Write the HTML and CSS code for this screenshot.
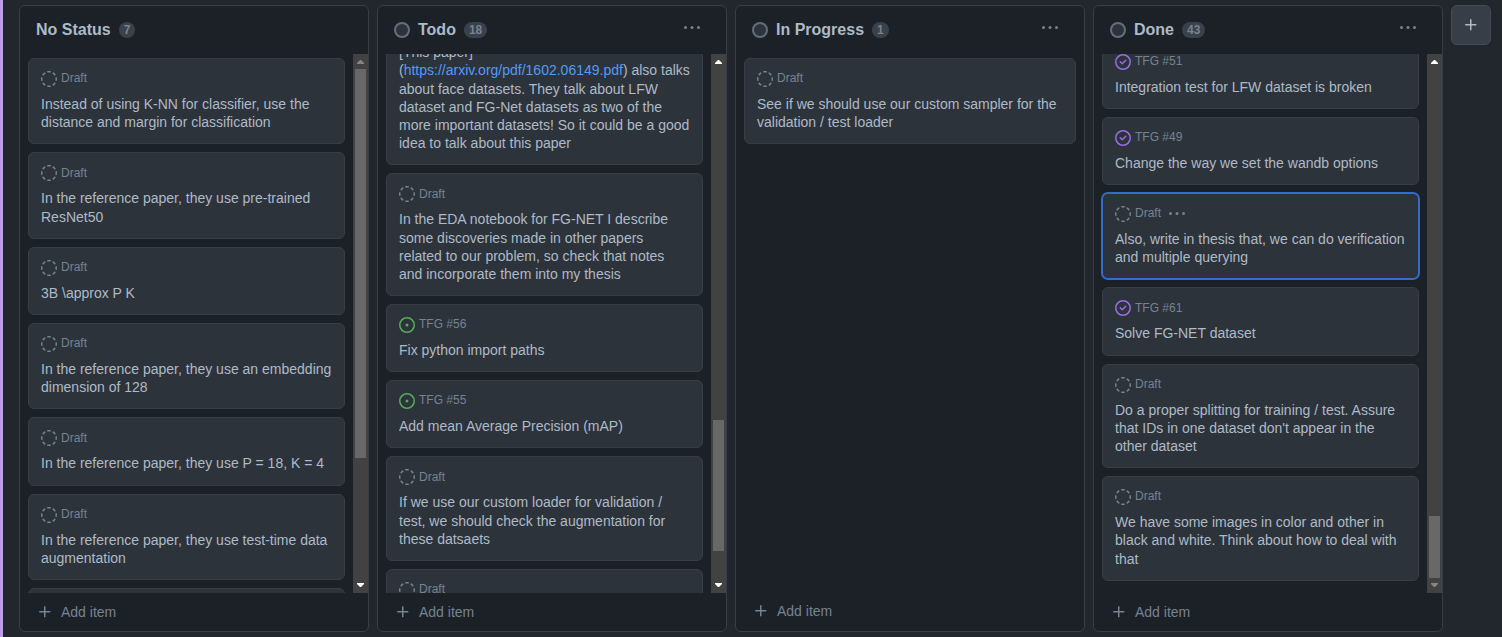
FILE: index.html
```html
<!DOCTYPE html>
<html lang="en">
<head>
<meta charset="utf-8">
<title>Project board</title>
<link rel="stylesheet" href="styles.css">
</head>
<body>
<svg class="sprite" aria-hidden="true">
  <symbol id="draft" viewBox="0 0 16 16"><path fill="currentColor" d="M14.307 11.655a.75.75 0 01.165 1.048 8.05 8.05 0 01-1.769 1.77.75.75 0 01-.883-1.214 6.552 6.552 0 001.44-1.439.75.75 0 011.047-.165zm-2.652-9.962a.75.75 0 011.048-.165 8.05 8.05 0 011.77 1.769.75.75 0 01-1.214.883 6.552 6.552 0 00-1.439-1.44.75.75 0 01-.165-1.047zM6.749.097a8.074 8.074 0 012.502 0 .75.75 0 11-.233 1.482 6.558 6.558 0 00-2.036 0A.75.75 0 016.749.097zM.955 6.125a.75.75 0 01.624.857 6.558 6.558 0 000 2.036.75.75 0 01-1.482.233 8.074 8.074 0 010-2.502.75.75 0 01.858-.624zm14.09 0a.75.75 0 01.858.624c.13.829.13 1.673 0 2.502a.75.75 0 11-1.482-.233 6.558 6.558 0 000-2.036.75.75 0 01.624-.857zm-13.352 5.53a.75.75 0 011.048.165 6.552 6.552 0 001.439 1.44.75.75 0 01-.883 1.212 8.05 8.05 0 01-1.77-1.769.75.75 0 01.166-1.048zM4.345 1.693a.75.75 0 01-.165 1.048 6.552 6.552 0 00-1.44 1.439.75.75 0 01-1.212-.883 8.05 8.05 0 011.769-1.77.75.75 0 011.048.166zM6.125 15.045a.75.75 0 01.857-.624 6.558 6.558 0 002.036 0 .75.75 0 01.233 1.482 8.074 8.074 0 01-2.502 0 .75.75 0 01-.588-.858z"/></symbol>
  <symbol id="open" viewBox="0 0 16 16"><circle cx="8" cy="8" r="7.25" fill="none" stroke="currentColor" stroke-width="1.5"/><circle cx="8" cy="8" r="1.5" fill="currentColor"/></symbol>
  <symbol id="closed" viewBox="0 0 16 16"><circle cx="8" cy="8" r="7.25" fill="none" stroke="currentColor" stroke-width="1.5"/><path fill="currentColor" d="M11.28 6.78a.75.75 0 00-1.06-1.06L7.25 8.69 5.78 7.22a.75.75 0 00-1.06 1.06l2 2a.75.75 0 001.06 0l3.5-3.5z"/></symbol>
  <symbol id="dots" viewBox="0 0 16 16"><g fill="currentColor"><circle cx="1.5" cy="7.5" r="1.5"/><circle cx="8" cy="7.5" r="1.5"/><circle cx="14.5" cy="7.5" r="1.5"/></g></symbol>
  <symbol id="plus" viewBox="0 0 16 16"><path fill="currentColor" d="M7.75 2a.75.75 0 01.75.75V7h4.25a.75.75 0 010 1.5H8.5v4.25a.75.75 0 01-1.5 0V8.5H2.75a.75.75 0 010-1.5H7V2.75A.75.75 0 017.75 2z"/></symbol>
</svg>
<main class="board">
  <section class="column">
    <header class="column-head"><h2>No Status</h2><span class="count">7</span></header>
    <div class="scroller">
      <div class="cards">
        <article class="card"><div class="meta"><svg class="icon"><use href="#draft"/></svg><span>Draft</span></div><p>Instead of using K-NN for classifier, use the distance and margin for classification</p></article>
        <article class="card"><div class="meta"><svg class="icon"><use href="#draft"/></svg><span>Draft</span></div><p>In the reference paper, they use pre-trained ResNet50</p></article>
        <article class="card"><div class="meta"><svg class="icon"><use href="#draft"/></svg><span>Draft</span></div><p>3B \approx P K</p></article>
        <article class="card"><div class="meta"><svg class="icon"><use href="#draft"/></svg><span>Draft</span></div><p>In the reference paper, they use an embedding dimension of 128</p></article>
        <article class="card"><div class="meta"><svg class="icon"><use href="#draft"/></svg><span>Draft</span></div><p>In the reference paper, they use P = 18, K = 4</p></article>
        <article class="card"><div class="meta"><svg class="icon"><use href="#draft"/></svg><span>Draft</span></div><p>In the reference paper, they use test-time data augmentation</p></article>
        <article class="card card-empty"></article>
      </div>
      <div class="bar bar-start"><i class="up off"></i><div class="track"><b></b></div><i class="down"></i></div>
    </div>
    <footer class="add"><svg class="icon"><use href="#plus"/></svg><span>Add item</span></footer>
  </section>

  <section class="column">
    <header class="column-head"><i class="dot"></i><h2>Todo</h2><span class="count">18</span><svg class="dots"><use href="#dots"/></svg></header>
    <div class="scroller">
      <div class="cards scrolled-todo">
        <article class="card"><div class="meta"></div><p>[This paper]<br>(<a>https://arxiv.org/pdf/1602.06149.pdf</a>) also talks about face datasets. They talk about LFW dataset and FG-Net datasets as two of the more important datasets! So it could be a good idea to talk about this paper</p></article>
        <article class="card"><div class="meta"><svg class="icon"><use href="#draft"/></svg><span>Draft</span></div><p>In the EDA notebook for FG-NET I describe some discoveries made in other papers related to our problem, so check that notes and incorporate them into my thesis</p></article>
        <article class="card"><div class="meta"><svg class="icon green"><use href="#open"/></svg><span>TFG #56</span></div><p>Fix python import paths</p></article>
        <article class="card"><div class="meta"><svg class="icon green"><use href="#open"/></svg><span>TFG #55</span></div><p>Add mean Average Precision (mAP)</p></article>
        <article class="card"><div class="meta"><svg class="icon"><use href="#draft"/></svg><span>Draft</span></div><p>If we use our custom loader for validation / test, we should check the augmentation for these datsaets</p></article>
        <article class="card card-empty"><div class="meta"><svg class="icon"><use href="#draft"/></svg><span>Draft</span></div></article>
      </div>
      <div class="bar bar-middle"><i class="up"></i><div class="track"><b></b></div><i class="down"></i></div>
    </div>
    <footer class="add"><svg class="icon"><use href="#plus"/></svg><span>Add item</span></footer>
  </section>

  <section class="column">
    <header class="column-head"><i class="dot"></i><h2>In Progress</h2><span class="count">1</span><svg class="dots"><use href="#dots"/></svg></header>
    <div class="scroller">
      <div class="cards">
        <article class="card"><div class="meta"><svg class="icon"><use href="#draft"/></svg><span>Draft</span></div><p>See if we should use our custom sampler for the validation / test loader</p></article>
      </div>
    </div>
    <footer class="add add-raised"><svg class="icon"><use href="#plus"/></svg><span>Add item</span></footer>
  </section>

  <section class="column">
    <header class="column-head"><i class="dot"></i><h2>Done</h2><span class="count">43</span><svg class="dots"><use href="#dots"/></svg></header>
    <div class="scroller">
      <div class="cards scrolled-done">
        <article class="card"><div class="meta"><svg class="icon purple"><use href="#closed"/></svg><span>TFG #51</span></div><p>Integration test for LFW dataset is broken</p></article>
        <article class="card"><div class="meta"><svg class="icon purple"><use href="#closed"/></svg><span>TFG #49</span></div><p>Change the way we set the wandb options</p></article>
        <article class="card selected"><div class="meta"><svg class="icon"><use href="#draft"/></svg><span>Draft</span><svg class="dots"><use href="#dots"/></svg></div><p>Also, write in thesis that, we can do verification and multiple querying</p></article>
        <article class="card"><div class="meta"><svg class="icon purple"><use href="#closed"/></svg><span>TFG #61</span></div><p>Solve FG-NET dataset</p></article>
        <article class="card"><div class="meta"><svg class="icon"><use href="#draft"/></svg><span>Draft</span></div><p>Do a proper splitting for training / test. Assure that IDs in one dataset don't appear in the other dataset</p></article>
        <article class="card"><div class="meta"><svg class="icon"><use href="#draft"/></svg><span>Draft</span></div><p>We have some images in color and other in black and white. Think about how to deal with that</p></article>
      </div>
      <div class="bar bar-end"><i class="up"></i><div class="track"><b></b></div><i class="down off"></i></div>
    </div>
    <footer class="add"><svg class="icon"><use href="#plus"/></svg><span>Add item</span></footer>
  </section>

  <button class="new-column" aria-label="Add column"><svg class="icon"><use href="#plus"/></svg></button>
</main>
</body>
</html>
```
FILE: styles.css
```css
* { box-sizing: border-box; }
body {
  margin: 0;
  height: 637px;
  overflow: hidden;
  background: #22272e;
  border-left: 3px solid #bd9fe8;
  color: #adbac7;
  font: 14px/1.3 "Liberation Sans", Arial, sans-serif;
}
.sprite { display: none; }
h2, p { margin: 0; }
.board {
  display: flex;
  align-items: flex-start;
  gap: 8px;
  padding: 5px 0 0 16px;
}
.column {
  flex: none;
  display: flex;
  flex-direction: column;
  width: 350px;
  height: 627px;
  border: 1px solid #373e47;
  border-radius: 6px;
  background: #1c2128;
}
.column-head {
  display: flex;
  align-items: center;
  flex: none;
  gap: 8px;
  height: 48px;
  padding: 0 26px 0 16px;
}
.column-head h2 { font-size: 16px; line-height: 24px; }
.column-head .dots { margin: 0 0 4px auto; }
.dots { width: 16px; height: 16px; color: #768390; }
.dot {
  width: 16px;
  height: 16px;
  border: 2px solid #636e7b;
  border-radius: 50%;
  background: #2d333b;
}
.count {
  min-width: 16px;
  height: 16px;
  padding: 0 5px;
  border-radius: 8px;
  background: #3a414b;
  color: #768390;
  font-size: 12px;
  font-weight: 700;
  line-height: 16px;
  text-align: center;
}
.scroller {
  flex: 1;
  display: flex;
  min-height: 0;
  overflow: hidden;
}
.cards {
  flex: 1;
  display: flex;
  flex-direction: column;
  gap: 8px;
  padding: 4px 8px 0;
}
.scrolled-todo { margin-top: -51.8px; }
.scrolled-done { margin-top: -17.33px; }
.card {
  flex: none;
  padding: 12px;
  border: 1px solid #373e47;
  border-radius: 6px;
  background: #2d333b;
}
.card-empty { height: 68px; }
.selected { border-color: #316dca; box-shadow: 0 0 0 1px #316dca; }
.meta {
  display: flex;
  gap: 4px;
  height: 24px;
  color: #768390;
  font-size: 12px;
  line-height: 14px;
}
.meta span { padding-top: 0.2px; }
.meta .dots { margin-left: 4px; }
.icon { flex: none; width: 16px; height: 16px; }
.green { color: #57ab5a; }
.purple { color: #986ee2; }
a { color: #539bf5; }
.bar {
  flex: none;
  display: flex;
  flex-direction: column;
  width: 15px;
  height: 539px;
  background: #424242;
}
.track { flex: 1; padding: 0 2px; }
.track b { display: block; background: #686868; }
.bar-start b { height: 389px; }
.bar-middle .track { padding-top: 351px; }
.bar-middle b { height: 131px; }
.bar-end .track { padding-top: 447px; }
.bar-end b { height: 62px; }
.up, .down { display: flex; height: 15px; padding: 6px 0 0 4px; }
.up::before, .down::before {
  content: "";
  width: 7px;
  height: 4px;
  background: #fff;
  clip-path: polygon(3px 0, 4px 0, 7px 3px, 7px 4px, 0 4px, 0 3px);
}
.down { padding-top: 5px; }
.down::before { clip-path: polygon(0 0, 7px 0, 7px 1px, 4px 4px, 3px 4px, 0 1px); }
.off::before { background: #868686; }
.add {
  flex: none;
  display: flex;
  align-items: center;
  gap: 8px;
  height: 38px;
  padding-left: 17px;
  color: #768390;
}
.add-raised { padding-bottom: 2px; }
.new-column {
  display: flex;
  align-items: center;
  justify-content: center;
  width: 40px;
  height: 40px;
  padding: 0;
  border: 1px solid #444c56;
  border-radius: 6px;
  background: #373e47;
  color: #adbac7;
}
```
